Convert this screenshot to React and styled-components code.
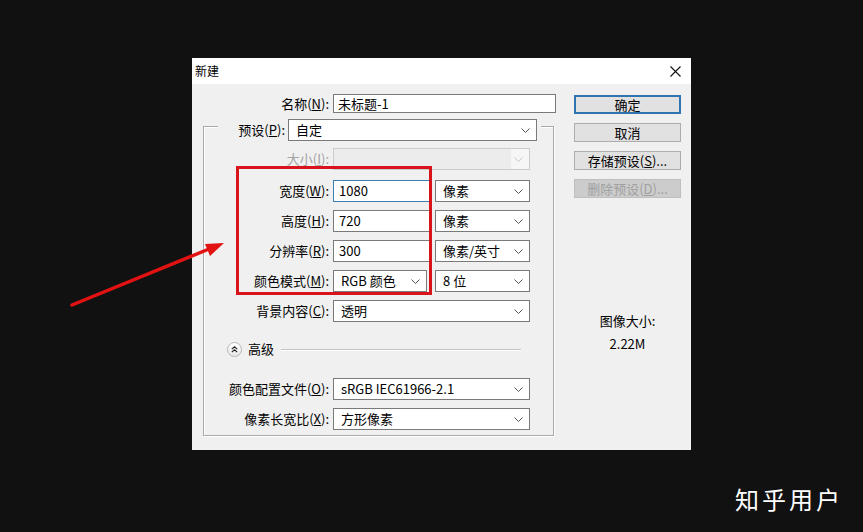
import React from "react";
import styled, { createGlobalStyle, css } from "styled-components";

const GlobalStyle = createGlobalStyle`
  html, body {
    margin: 0;
    padding: 0;
    background: #111111;
  }
  body {
    font-family: "Noto Sans CJK SC", "Noto Sans", sans-serif;
    color: #000;
  }
`;

const Page = styled.div`
  position: relative;
  width: 863px;
  height: 532px;
  box-sizing: border-box;
  padding: 58px 0 0 192px;
  background: #111111;
  overflow: hidden;
`;

const Dialog = styled.div`
  width: 499px;
  background: #f0f0f0;
  display: flex;
  flex-direction: column;
`;

const TitleBar = styled.div`
  height: 26px;
  background: #ffffff;
  display: flex;
  align-items: center;
  justify-content: space-between;
  padding: 0 10px 0 3px;
  font-size: 12px;
  line-height: 16px;
`;

const Body = styled.div`
  display: flex;
  gap: 17px;
  padding: 10px 10px 14px 11px;
`;

const LeftCol = styled.div`
  width: 354px;
  display: flex;
  flex-direction: column;
`;

const RightCol = styled.div`
  width: 107px;
  display: flex;
  flex-direction: column;
  padding-top: 1px;
`;

const Row = styled.div`
  display: flex;
  align-items: center;
  height: ${(p) => p.$h || 22}px;
  margin-top: ${(p) => p.$mt || 0}px;
`;

const Label = styled.div`
  width: ${(p) => (p.$w ? `${p.$w}px` : "125px")};
  margin-right: 4px;
  text-align: right;
  font-size: 13px;
  line-height: 18px;
  white-space: nowrap;
  color: ${(p) => (p.$disabled ? "#a3a3a3" : "#000")};
  ${(p) =>
    p.$auto &&
    css`
      width: auto;
      margin-right: 3px;
    `}
`;

const Input = styled.div`
  width: ${(p) => p.$w}px;
  height: 100%;
  box-sizing: border-box;
  background: #fff;
  border: 1px solid ${(p) => (p.$focus ? "#3a7fb4" : "#7a7a7a")};
  padding: 0 ${(p) => p.$pl || 5}px;
  font-size: 13px;
  line-height: 18px;
  display: flex;
  align-items: center;
  white-space: nowrap;
`;

const Select = styled.div`
  width: ${(p) => p.$w}px;
  height: 100%;
  box-sizing: border-box;
  background: #fff;
  border: 1px solid #7a7a7a;
  padding: 0 6px 0 7px;
  font-size: 13px;
  line-height: 18px;
  display: flex;
  align-items: center;
  justify-content: space-between;
  margin-left: ${(p) => p.$ml || 0}px;
  white-space: nowrap;
  color: #000;
  ${(p) =>
    p.$disabled &&
    css`
      background: linear-gradient(to right, #ececec 0 calc(100% - 18px), #f6f6f6 calc(100% - 18px));
      border-color: #cccccc;
      color: #a3a3a3;
    `}
`;

const GroupBox = styled.div`
  margin-top: 13px;
  width: 351px;
  box-sizing: border-box;
  border: 1px solid #a9a9a9;
  box-shadow: 1px 1px 0 #ffffff, inset 1px 1px 0 #ffffff;
  padding-bottom: 5px;
  display: flex;
  flex-direction: column;
`;

const GroupHeader = styled.div`
  margin: -8px 0 0 14px;
  width: 323px;
  height: 22px;
  box-sizing: border-box;
  padding-right: 4px;
  background: #f0f0f0;
  display: flex;
  align-items: center;
  justify-content: flex-end;
`;

const Highlight = styled.div`
  position: relative;
  margin-top: 10px;
`;

const RedBox = styled.div`
  position: absolute;
  left: 32px;
  top: -14px;
  width: 196px;
  height: 129px;
  box-sizing: border-box;
  border: 3px solid #d8131b;
  pointer-events: none;
`;

const AdvancedRow = styled.div`
  display: flex;
  align-items: center;
  height: 22px;
  margin-top: 16px;
  padding-left: 23px;
  padding-right: 32px;
`;

const RoundToggle = styled.div`
  width: 15px;
  height: 15px;
  box-sizing: border-box;
  border-radius: 50%;
  border: 1px solid #b5b5b5;
  background: linear-gradient(#ffffff, #e8e8e8);
  display: flex;
  align-items: center;
  justify-content: center;
  margin-right: 6px;
`;

const AdvancedText = styled.div`
  font-size: 13px;
  line-height: 18px;
  margin-right: 7px;
`;

const Rule = styled.div`
  flex: 1;
  height: 1px;
  background: #c3c3c3;
  box-shadow: 0 1px 0 #ffffff;
`;

const Button = styled.div`
  height: 19px;
  box-sizing: border-box;
  border: 1px solid #adadad;
  background: #e1e1e1;
  font-size: 13px;
  line-height: 17px;
  display: flex;
  align-items: center;
  justify-content: center;
  margin-bottom: 9px;
  white-space: nowrap;
  ${(p) =>
    p.$primary &&
    css`
      border-color: #2d74b0;
      box-shadow: inset 0 0 0 1px #2d74b0;
    `}
  ${(p) =>
    p.$disabled &&
    css`
      background: #cccccc;
      border-color: #bfbfbf;
      color: #a0a0a0;
    `}
`;

const SizeInfo = styled.div`
  margin-top: 105px;
  text-align: center;
  font-size: 13px;
  line-height: 18px;
`;

const SizeValue = styled.div`
  margin-top: 5px;
  text-align: center;
  font-size: 13px;
  line-height: 18px;
`;

const Watermark = styled.div`
  position: absolute;
  left: 735px;
  top: 486px;
  color: #ffffff;
  font-size: 24px;
  line-height: 26px;
  letter-spacing: 3px;
  font-family: "Noto Sans CJK SC", sans-serif;
`;

const ArrowLayer = styled.svg`
  position: absolute;
  left: 0;
  top: 0;
  width: 863px;
  height: 532px;
  pointer-events: none;
`;

function Chevron({ color = "#555" }) {
  return (
    <svg width="9" height="5" viewBox="0 0 9 5">
      <polyline points="0.5,0.5 4.5,4.5 8.5,0.5" fill="none" stroke={color} strokeWidth="1" />
    </svg>
  );
}

function Dropdown({ w, ml, disabled, children }) {
  return (
    <Select $w={w} $ml={ml} $disabled={disabled}>
      <span>{children}</span>
      <Chevron color={disabled ? "#c8c8c8" : "#555"} />
    </Select>
  );
}

export default function App() {
  return (
    <Page>
      <GlobalStyle />
      <Dialog>
        <TitleBar>
          <span>新建</span>
          <svg width="11" height="11" viewBox="0 0 11 11">
            <path d="M0.5 0.5 L10.5 10.5 M10.5 0.5 L0.5 10.5" stroke="#111" strokeWidth="1.1" />
          </svg>
        </TitleBar>
        <Body>
          <LeftCol>
            <Row $h={19}>
              <Label $w={126}>
                名称(<u>N</u>):
              </Label>
              <Input $w={223} $pl={4}>未标题-1</Input>
            </Row>
            <GroupBox>
              <GroupHeader>
                <Label $auto>
                  预设(<u>P</u>):
                </Label>
                <Dropdown w={249}>自定</Dropdown>
              </GroupHeader>
              <Row $mt={7}>
                <Label $disabled>
                  大小(<u>I</u>):
                </Label>
                <Dropdown w={197} disabled></Dropdown>
              </Row>
              <Highlight>
                <Row>
                  <Label>
                    宽度(<u>W</u>):
                  </Label>
                  <Input $w={97} $focus>1080</Input>
                  <Dropdown w={95} ml={5}>像素</Dropdown>
                </Row>
                <Row $mt={8}>
                  <Label>
                    高度(<u>H</u>):
                  </Label>
                  <Input $w={97}>720</Input>
                  <Dropdown w={95} ml={5}>像素</Dropdown>
                </Row>
                <Row $mt={8}>
                  <Label>
                    分辨率(<u>R</u>):
                  </Label>
                  <Input $w={97}>300</Input>
                  <Dropdown w={95} ml={5}>像素/英寸</Dropdown>
                </Row>
                <Row $mt={8}>
                  <Label>
                    颜色模式(<u>M</u>):
                  </Label>
                  <Dropdown w={94}>RGB 颜色</Dropdown>
                  <Dropdown w={95} ml={8}>8 位</Dropdown>
                </Row>
                <RedBox />
              </Highlight>
              <Row $mt={8}>
                <Label>
                  背景内容(<u>C</u>):
                </Label>
                <Dropdown w={197}>透明</Dropdown>
              </Row>
              <AdvancedRow>
                <RoundToggle>
                  <svg width="7" height="7" viewBox="0 0 7 7">
                    <path d="M0.8 3.2 L3.5 0.8 L6.2 3.2 M0.8 6.2 L3.5 3.8 L6.2 6.2" fill="none" stroke="#222" strokeWidth="1.1" />
                  </svg>
                </RoundToggle>
                <AdvancedText>高级</AdvancedText>
                <Rule />
              </AdvancedRow>
              <Row $mt={18}>
                <Label>
                  颜色配置文件(<u>O</u>):
                </Label>
                <Dropdown w={197}>sRGB IEC61966-2.1</Dropdown>
              </Row>
              <Row $mt={8}>
                <Label>
                  像素长宽比(<u>X</u>):
                </Label>
                <Dropdown w={197}>方形像素</Dropdown>
              </Row>
            </GroupBox>
          </LeftCol>
          <RightCol>
            <Button $primary>确定</Button>
            <Button>取消</Button>
            <Button>
              存储预设(<u>S</u>)...
            </Button>
            <Button $disabled>
              删除预设(<u>D</u>)...
            </Button>
            <SizeInfo>图像大小:</SizeInfo>
            <SizeValue>2.22M</SizeValue>
          </RightCol>
        </Body>
      </Dialog>
      <ArrowLayer viewBox="0 0 863 532">
        <line x1="72" y1="305" x2="209" y2="249" stroke="#e31212" strokeWidth="3.5" strokeLinecap="round" />
        <polygon points="224,243 205,244 210,256" fill="#e31212" />
      </ArrowLayer>
      <Watermark>知乎用户</Watermark>
    </Page>
  );
}
